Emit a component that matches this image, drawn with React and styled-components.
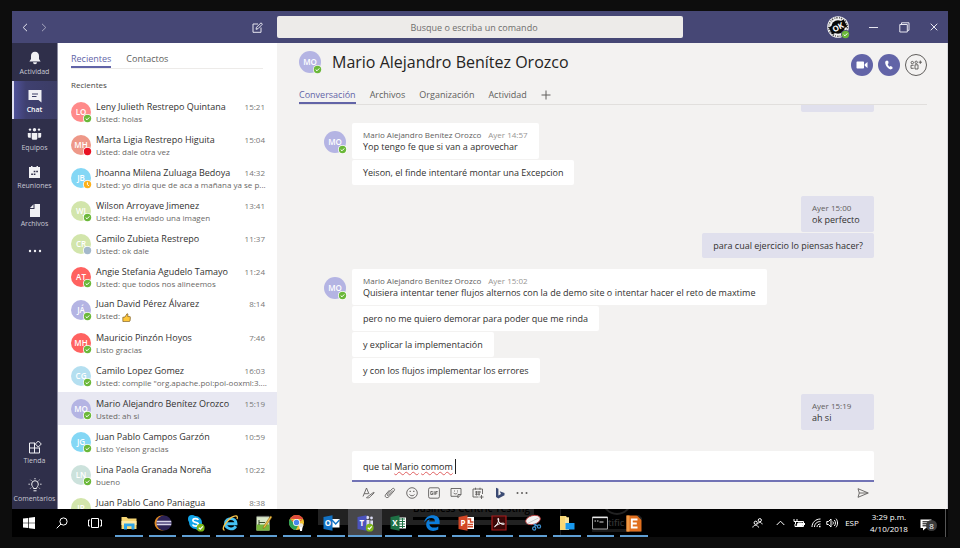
import React, { useState } from "react";
import styled, { createGlobalStyle, css } from "styled-components";

const Global = createGlobalStyle`
  * { box-sizing: border-box; }
  body { margin: 0; background: #0d0d0d; font-family: "Open Sans", "Noto Sans", sans-serif; }
  button, input { font: inherit; color: inherit; background: none; border: 0; padding: 0; margin: 0; }
  ul { list-style: none; margin: 0; padding: 0; }
  svg { display: block; flex: none; }
`;

/* ---------- frame ---------- */

const Screen = styled.div`
  height: 100vh;
  padding: 11px 12px;
  display: flex;
  flex-direction: column;
  font-size: 9px;
  line-height: 12px;
  color: #333;
`;

const Body = styled.div`
  flex: 1;
  min-height: 0;
  display: grid;
  grid-template-columns: 46px 219px minmax(0, 1fr);
`;

/* ---------- title bar ---------- */

const TitleBar = styled.header`
  height: 32px;
  flex: none;
  display: flex;
  align-items: center;
  background: #464775;
  color: #e6e6f0;
`;

const TitleLeft = styled.div`
  width: 265px;
  flex: none;
  display: flex;
  align-items: center;
  padding: 0 13px 0 6px;
`;

const IconButton = styled.button`
  width: ${(p) => p.$w || 20}px;
  height: ${(p) => p.$h || 20}px;
  flex: none;
  display: flex;
  align-items: center;
  justify-content: center;
  opacity: ${(p) => (p.$dim ? 0.6 : 1)};
`;

const Push = styled.span`
  flex: 1;
`;

const Search = styled.input`
  flex: 0 1 406px;
  min-width: 0;
  height: 22px;
  border-radius: 2px;
  background: #edebe9;
  color: #333;
  text-align: center;
  padding-right: 2px;
  outline: 0;
  &::placeholder {
    color: #6f6e6d;
    opacity: 1;
  }
`;

const WindowControls = styled.div`
  display: flex;
  align-items: center;
`;

/* ---------- avatars ---------- */

const AvatarRoot = styled.span`
  position: relative;
  width: ${(p) => p.$size}px;
  height: ${(p) => p.$size}px;
  flex: none;
  border-radius: 50%;
  background: ${(p) => p.$color};
  color: #fff;
  font-size: 8px;
  font-weight: 600;
  display: flex;
  align-items: center;
  justify-content: center;
`;

const BadgeSpot = styled.span`
  position: absolute;
  right: -1px;
  bottom: -1px;
`;

const presenceColor = { ok: "#6bb83a", busy: "#e81123", away: "#fcb019", off: "#a4b8cb" };

function Presence({ kind, ring = "#fff" }) {
  return (
    <svg width="9" height="9" viewBox="0 0 9 9" aria-hidden="true">
      <circle cx="4.5" cy="4.5" r="4.5" fill={ring} />
      <circle cx="4.5" cy="4.5" r="3.7" fill={presenceColor[kind]} />
      {kind === "ok" && <path d="M2.7 4.6l1.3 1.2 2.3-2.4" fill="none" stroke="#fff" strokeWidth="1" />}
      {kind === "away" && <path d="M4.4 2.3v2.4l1.5 1.1" fill="none" stroke="#fff" strokeWidth="1" />}
    </svg>
  );
}

function Avatar({ initials, color = "#b4b4e3", size = 20, presence = "ok", ring }) {
  return (
    <AvatarRoot $size={size} $color={color}>
      {initials}
      <BadgeSpot>
        <Presence kind={presence} ring={ring} />
      </BadgeSpot>
    </AvatarRoot>
  );
}

const Profile = styled.button`
  position: relative;
  width: 22px;
  height: 22px;
  margin-right: 9px;
`;

/* ---------- rail ---------- */

const Rail = styled.nav`
  background: #2f2f4a;
  border-right: 1px solid #8c8ca0;
  color: #c8c8d4;
  display: flex;
  flex-direction: column;
  min-height: 0;
`;

const RailItem = styled.button`
  height: 38px;
  flex: none;
  display: flex;
  flex-direction: column;
  align-items: center;
  justify-content: flex-end;
  gap: 1px;
  padding-bottom: 5px;
  font-size: 7px;
  line-height: 9px;
  ${(p) =>
    p.$active &&
    css`
      color: #fff;
      font-weight: 600;
      background: linear-gradient(90deg, #5254a0 0, #3f4070 14px, #3b3c64 100%);
      box-shadow: inset 2px 0 #dcdcf0;
    `}
`;

const RailMore = styled(RailItem)`
  justify-content: center;
  padding: 0 0 2px;
`;

const RailIcon = styled.span`
  height: 16px;
  display: flex;
  align-items: center;
  color: #f0f0f4;
`;

const RailSpace = styled.span`
  height: 1px;
  flex: none;
`;

/* ---------- contact list ---------- */

const ListPane = styled.section`
  background: #fff;
  overflow: hidden;
  min-height: 0;
`;

const TabStrip = styled.div`
  display: flex;
  gap: ${(p) => p.$gap}px;
  border-bottom: 1px solid ${(p) => p.$line};
`;

const Tab = styled.button`
  height: ${(p) => p.$h}px;
  color: ${(p) => (p.$active ? "#6264a7" : "#605e5c")};
  border-bottom: 2px solid ${(p) => (p.$active ? "#6264a7" : "transparent")};
`;

const ListTabs = styled.div`
  padding: 9px 14px 0 13px;
`;

const GroupTitle = styled.h2`
  margin: 0;
  padding: 10px 13px 4px;
  font-size: 8px;
  line-height: 12px;
  font-weight: 400;
  color: #484644;
`;

const Row = styled.button`
  width: 100%;
  height: 33px;
  padding: 0 12px 0 13px;
  display: grid;
  grid-template-columns: 20px minmax(0, 1fr);
  column-gap: 5px;
  align-items: center;
  text-align: left;
  background: ${(p) => (p.$selected ? "#e8e8f2" : "transparent")};
`;

const RowLine = styled.span`
  display: flex;
  justify-content: space-between;
`;

const RowName = styled.span`
  font-size: 9px;
  line-height: 14px;
  color: #323130;
  white-space: nowrap;
`;

const RowTime = styled.span`
  font-size: 8px;
  line-height: 14px;
  color: #777;
`;

const RowPreview = styled.span`
  display: block;
  margin-right: -6px;
  font-size: 8px;
  line-height: 10px;
  color: #6a6866;
  overflow: hidden;
  white-space: nowrap;
  text-overflow: ellipsis;
  & svg {
    display: inline-block;
    vertical-align: middle;
  }
`;

/* ---------- conversation ---------- */

const Main = styled.main`
  background: #f3f2f1;
  border-right: 1px solid #d8d8dc;
  display: flex;
  flex-direction: column;
  min-width: 0;
  min-height: 0;
`;

const ChatHeader = styled.div`
  padding: 7px 20px 0 22px;
  flex: none;
`;

const HeaderTop = styled.div`
  height: 24px;
  display: flex;
  align-items: center;
  gap: 11px;
`;

const PersonTitle = styled.h1`
  margin: 0;
  flex: 1;
  font-size: 16px;
  line-height: 22px;
  font-weight: 500;
  color: #252423;
  white-space: nowrap;
`;

const CallButtons = styled.div`
  display: flex;
  gap: 5px;
  padding-top: 6px;
`;

const RoundButton = styled.button`
  width: 22px;
  height: 22px;
  border-radius: 50%;
  display: flex;
  align-items: center;
  justify-content: center;
  color: ${(p) => (p.$outline ? "#484644" : "#fff")};
  background: ${(p) => (p.$outline ? "transparent" : "#6264a7")};
  border: ${(p) => (p.$outline ? "1px solid #605e5c" : "0")};
`;

const HeaderTabs = styled.div`
  padding-top: 13px;
`;

const Thread = styled.div`
  flex: 1;
  min-height: 0;
  overflow: hidden;
  display: flex;
  flex-direction: column;
  justify-content: flex-end;
  gap: 11px;
  padding: 0 73px 21px 47px;
`;

const Group = styled.div`
  display: flex;
  flex: none;
  gap: 6px;
  justify-content: ${(p) => (p.$own ? "flex-end" : "flex-start")};
`;

const GroupAvatar = styled.div`
  padding-top: 8px;
`;

const Bubbles = styled.div`
  display: flex;
  flex-direction: column;
  gap: 1px;
  align-items: ${(p) => (p.$own ? "flex-end" : "flex-start")};
`;

const Bubble = styled.div`
  min-height: 25px;
  min-width: 73px;
  padding: 7px 11px 6px;
  border-radius: 2px;
  background: ${(p) => (p.$own ? "#e0e0ed" : "#fff")};
  color: #323130;
`;

const Meta = styled.div`
  display: flex;
  gap: 7px;
  margin: -1px 0 1px;
  font-size: 8px;
  line-height: 11px;
  color: #605e5c;
`;

const Stamp = styled.time`
  color: ${(p) => (p.$own ? "#605e5c" : "#979593")};
`;

const Composer = styled.form`
  flex: none;
  padding: 0 73px 0 75px;
`;

const ComposeBox = styled.div`
  position: relative;
  height: 31px;
  background: #fff;
  border-bottom: 2px solid #7173b5;
  border-radius: 2px 2px 0 0;
`;

const ComposeInput = styled.input`
  width: 100%;
  height: 29px;
  padding: 2px 11px 0;
  outline: 0;
  color: #252423;
`;

const SpellLayer = styled.div`
  position: absolute;
  inset: 0;
  padding: 10px 11px;
  color: transparent;
  white-space: pre;
  pointer-events: none;
`;

const Misspelt = styled.span`
  text-decoration: underline wavy #e06060 1px;
  text-underline-offset: 1px;
  text-decoration-skip-ink: none;
`;

const Caret = styled.span`
  border-left: 1px solid #222;
  padding: 1px 0;
`;

const ComposeTools = styled.div`
  height: 27px;
  padding: 0 1px 5px 6px;
  display: flex;
  align-items: center;
  gap: 2px;
  color: #605e5c;
`;

/* ---------- taskbar ---------- */

const Taskbar = styled.footer`
  position: relative;
  height: 28px;
  flex: none;
  display: flex;
  background: #000;
  color: #fff;
  overflow: hidden;
`;

const Backdrop = styled.div`
  position: absolute;
  inset: 0;
  color: #000;
  & svg {
    width: 936px;
    height: 28px;
  }
`;

const SystemKeys = styled.div`
  position: relative;
  display: grid;
  grid-template-columns: repeat(3, 33px);
`;

const Apps = styled.div`
  position: relative;
  flex: 0 1 539px;
  margin-left: 1px;
  display: grid;
  grid-template-columns: repeat(16, minmax(0, 1fr));
`;

const TaskButton = styled.button`
  height: 28px;
  padding: 2px 0;
  display: flex;
  align-items: center;
  justify-content: center;
`;

const AppButton = styled(TaskButton)`
  margin: 0 ${(p) => (p.$active ? 0 : 3)}px;
  background: ${(p) => (p.$active ? "#47474a" : "transparent")};
  border-bottom: 2px solid #5f9fd4;
  padding: 2px 0 0;
`;

const Tray = styled.div`
  position: relative;
  margin-left: auto;
  display: flex;
  align-items: center;
  padding-right: 1px;
`;

const Language = styled.button`
  width: 26px;
  font-size: 8px;
`;

const Clock = styled.button`
  width: 48px;
  text-align: center;
  font-size: 8px;
  line-height: 12px;
`;

const Notice = styled.button`
  position: relative;
  width: 32px;
  height: 24px;
  padding: 4px 0 0 7px;
`;

const Count = styled.span`
  position: absolute;
  left: 13px;
  top: 9px;
  width: 11px;
  height: 11px;
  border-radius: 50%;
  background: #3c3c3c;
  font-size: 8px;
  line-height: 11px;
  text-align: center;
`;

const ShowDesktop = styled.button`
  width: 2px;
  height: 28px;
  border-left: 1px solid #555;
`;

/* ---------- icons ---------- */

function Icon({ w = 14, h = w, box = `0 0 ${w} ${h}`, children, sw = 1 }) {
  return (
    <svg width={w} height={h} viewBox={box} fill="none" stroke="currentColor" strokeWidth={sw} aria-hidden="true">
      {children}
    </svg>
  );
}

const icons = {
  bell: (
    <Icon w={14}>
      <path d="M7 .8c-2.600 0-4 1.800-4 4.200v3L1.400 10.400h11.200L11 8V5C11 2.600 9.600.8 7 .8z" fill="currentColor" stroke="none" />
      <path d="M5 11.300h4a2 2 0 01-4 0z" fill="currentColor" stroke="none" />
    </Icon>
  ),
  chat: (
    <Icon w={14}>
      <path d="M.5 1h13v12.500L10.500 11H.5z" fill="currentColor" stroke="none" />
      <path d="M4 5h6M4 7.500h4.500" stroke="#3b3c64" />
    </Icon>
  ),
  teams: (
    <Icon w={15} h={14}>
      <g fill="currentColor" stroke="none">
        <circle cx="7.500" cy="2.800" r="1.700" />
        <circle cx="3" cy="2.600" r="1.200" />
        <circle cx="12" cy="2.600" r="1.200" />
        <path d="M4.700 6h5.600v5.200a1.500 1.500 0 01-1.500 1.500H6.200a1.500 1.500 0 01-1.500-1.500z" />
        <path d="M.8 6h3v4.700H2.300A1.500 1.500 0 01.8 9.200zM14.200 6h-3v4.700h1.500a1.500 1.500 0 001.500-1.500z" />
      </g>
    </Icon>
  ),
  calendar: (
    <Icon w={13} h={14}>
      <path d="M1 2h2V1h1.500v1h4V1H10v1h2v11H1z" fill="currentColor" stroke="none" />
      <g stroke="#2f2f4a" strokeWidth="1.600">
        <path d="M5.700 6.500h1.700M8.200 6.500h1.700M3.200 9.300h1.700M5.700 9.300h1.700" />
      </g>
    </Icon>
  ),
  files: (
    <Icon w={12} h={15}>
      <path d="M5.500 1H11v13H1V6h4.500z" fill="currentColor" stroke="none" />
      <path d="M4.500 1.300V5H1z" fill="currentColor" stroke="none" />
    </Icon>
  ),
  store: (
    <Icon w={14}>
      <path d="M7 3H1.500v10h10V7.500M1.500 8h10M6.500 3v10" />
      <path d="M10.300 1l3 3-3 3-3-3z" />
    </Icon>
  ),
  bulb: (
    <Icon w={16} h={14}>
      <path d="M6.500 10.500C6.500 9 4.700 8.400 4.700 6a3.300 3.300 0 016.600 0c0 2.400-1.800 3-1.800 4.500zM6.500 12.800h3" />
      <path d="M8 0v1.300M3.500 1.800l.9.9M12.500 1.800l-.9.9M1.500 6.200h1.300M13.200 6.200h1.300M3.300 10.500l.8-.8M12.700 10.500l-.8-.8" />
    </Icon>
  ),
  dots: (
    <Icon w={14} h={4}>
      <g fill="currentColor" stroke="none">
        <circle cx="2" cy="2" r="1.200" />
        <circle cx="7" cy="2" r="1.200" />
        <circle cx="12" cy="2" r="1.200" />
      </g>
    </Icon>
  ),
  dotsSmall: (
    <Icon w={12} h={4}>
      <g fill="currentColor" stroke="none">
        <circle cx="1.500" cy="2" r="1" />
        <circle cx="6" cy="2" r="1" />
        <circle cx="10.500" cy="2" r="1" />
      </g>
    </Icon>
  ),
  back: <Icon w={6} h={9}><path d="M5 .8L1.200 4.500 5 8.200" /></Icon>,
  forward: <Icon w={6} h={9}><path d="M1 .8l3.800 3.700L1 8.200" /></Icon>,
  edit: (
    <Icon w={11}>
      <path d="M6 2H1v8.300h8V5.500" />
      <path d="M4 7.300l.5-2L9 .8l1.400 1.400L6 6.700z" />
    </Icon>
  ),
  min: <Icon w={9}><path d="M0 4.500h9" /></Icon>,
  restore: (
    <Icon w={11}>
      <path d="M.8 2.500h7.500v7.500H.8z" />
      <path d="M2.500 2.500V.8H10v7.500H8.300" />
    </Icon>
  ),
  close: <Icon w={8}><path d="M.7.7l6.600 6.600M7.300.7L.7 7.300" /></Icon>,
  video: (
    <Icon w={12} h={8}>
      <path d="M.5 1.200Q.5.500 1.200.500h6q.8 0 .8.7v5.600q0 .7-.8.7h-6q-.7 0-.7-.7zM8.700 3.200L11.500 1v6L8.700 4.800z" fill="currentColor" stroke="none" />
    </Icon>
  ),
  phone: (
    <Icon w={10}>
      <path d="M2.800.5L1.300 1.400C.6 3.900 3.300 8.600 6.700 9.500l1.900-.9-.2-1.700-1.700-.8-1.200.7C4.600 6.200 3.900 5.100 3.700 4l.9-.8L4.200.900z" fill="currentColor" stroke="none" />
    </Icon>
  ),
  addPeople: (
    <Icon w={12} h={10} sw={0.8}>
      <circle cx="2.300" cy="2.600" r="1.200" />
      <circle cx="6.200" cy="2.300" r="1.200" />
      <path d="M3.700 5.300H1v3h2.700M5 4.800h3v4.200H5zM10.300.500v3.400M8.600 2.200H12" />
    </Icon>
  ),
  plus: <Icon w={10}><path d="M5 .5v9M.5 5h9" /></Icon>,
  format: (
    <Icon w={13} h={12} sw={0.9}>
      <path d="M1 9.500L4.500 1 7 7M2.200 6.700h4" />
      <path d="M4.500 10.700c1.300-.1 1.400-2 2.700-2.200l4.600-3.300.4.700-4 3.800c-.4 1.200-2.300 1.400-3.700 1z" />
    </Icon>
  ),
  clip: (
    <Icon w={12} sw={0.9}>
      <path d="M8.800 3.500L4.600 8.200c-.8 1-2-.1-1.200-1l4.700-5.300c1.400-1.400 3.300.2 2.100 1.800l-5.300 6c-2.100 2.200-5 0-3.100-2.400l3.700-4.200" />
    </Icon>
  ),
  smile: (
    <Icon w={12} sw={0.9}>
      <circle cx="6" cy="6" r="5.300" />
      <path d="M3.500 7.500c1 1.700 4 1.700 5 0" />
      <path d="M4.200 3.700v1.300M7.800 3.700v1.300" strokeWidth="1.200" />
    </Icon>
  ),
  gif: (
    <Icon w={12} sw={0.9}>
      <rect x=".6" y=".8" width="10.800" height="10.400" rx="1.500" />
      <path d="M4.700 4.500H2.800v3h1.900V6H4M6.200 4.200v3.600M7.700 7.800V4.500h2M7.700 6h1.600" />
    </Icon>
  ),
  sticker: (
    <Icon w={12} sw={0.9}>
      <path d="M1 1.500h10v6L8 10.700V7.500h3M8 9.300H1V1.500" />
      <path d="M3.500 5.800c.8 1.500 3 1.500 4 0M4.500 3.500v1M7.500 3.500v1" />
    </Icon>
  ),
  meet: (
    <Icon w={12} sw={0.9}>
      <path d="M6.500 10H1V2h9.500v5M3.500.700v2M8 .700v2M3 5h6M3 7.200h5M4.500 4v4.500M7 4v4.500M9.500 8v4M7.500 10h4" />
    </Icon>
  ),
  bing: (
    <Icon w={10} h={12}>
      <path d="M1 .8l2.400.9v6.800L6 7 4.700 4.200l4.800 1.700v2.400L3.400 11.500 1 10z" fill="#3b4a73" stroke="none" />
    </Icon>
  ),
  send: <Icon w={12} h={10} sw={0.9}><path d="M1 .7L11.300 5 1 9.300 2.300 5zM2.300 5h8" /></Icon>,
  thumb: (
    <svg width="9" height="9" viewBox="0 0 9 9" role="img" aria-label="Me gusta">
      <path d="M.8 4.300L3 4 5 .7l1 .5-.3 2.300 2.500.2.200 1-.4 3.300-.7.600H.9z" fill="#ffc83d" stroke="#7a5a20" strokeWidth=".7" />
    </svg>
  ),
};

function OkPhoto() {
  return (
    <svg width="22" height="22" viewBox="0 0 22 22" aria-hidden="true">
      <circle cx="11" cy="11" r="10.800" fill="#f4f4f4" />
      <circle cx="11" cy="11" r="9.300" fill="none" stroke="#555" strokeWidth="1.600" strokeDasharray="1.200 1.200 .7 .9" pathLength="50" />
      <circle cx="11" cy="11" r="6.800" fill="#0a0a0a" />
      <rect x="2.500" y="7" width="17" height="8" rx="1" fill="#0a0a0a" transform="rotate(-28 11 11)" />
      <text x="11" y="14" textAnchor="middle" fontSize="8" fontWeight="700" fill="#fff" transform="rotate(-28 11 11)">OK</text>
    </svg>
  );
}

/* ---------- taskbar artwork ---------- */

const Art = ({ children }) => (
  <svg width="18" height="18" viewBox="0 0 18 18" aria-hidden="true">{children}</svg>
);

const officeTile = (letter, fill) => (
  <>
    <path d="M1.500 3L10.500 1.300v15.400L1.500 15z" fill={fill} />
    <text x="5.900" y="12" textAnchor="middle" fontSize="8" fontWeight="700" fill="#fff">{letter}</text>
  </>
);

const skypeCheck = (
  <>
    <circle cx="13.700" cy="13.700" r="3.900" fill="#7cb518" />
    <path d="M11.800 13.700l1.500 1.400 2.500-2.700" fill="none" stroke="#fff" strokeWidth="1.200" />
  </>
);

const apps = [
  ["Explorador de archivos", <Art><path d="M1.500 3h5l1.500 1.500h8.500V15h-15z" fill="#f8d775" /><path d="M1.500 7h15v4h-15z" fill="#fde9a4" /><path d="M4 9.500h10.500v6h-3v-3.300H7v3.300H4z" fill="#2fa5e8" /></Art>],
  ["Eclipse", <Art><circle cx="8" cy="9" r="7.500" fill="#e08b25" /><circle cx="10" cy="9" r="7.500" fill="#2c2255" /><path d="M2.700 7.500h14.600M2.700 10.500h14.600" stroke="#d8d4ea" strokeWidth="1.300" /><path d="M2.500 9h15" stroke="#8f87b8" /></Art>],
  ["Skype Empresarial", <Art><circle cx="8.500" cy="8.500" r="6.500" fill="#12a5e8" /><circle cx="5" cy="5" r="4" fill="#12a5e8" /><circle cx="11.500" cy="12" r="4" fill="#12a5e8" /><path d="M11.300 6C10.500 4 5.800 4 5.900 6.600c.1 2.400 5.400 1.200 5.400 3.700 0 2.400-5 2.300-5.700.2" fill="none" stroke="#fff" strokeWidth="1.700" />{skypeCheck}</Art>],
  ["Internet Explorer", <Art><path d="M14.800 12.200c-2.700 4.700-10.300 2.700-10.300-2.700 0-6.500 10.500-6.600 10.500.3H5.500" fill="none" stroke="#45c1f3" strokeWidth="2.900" /><path d="M3.500 16.300C-1.500 14.500 10 1.300 15.300 2c1.300.2 1.300 1.700.7 3" fill="none" stroke="#f6c34a" strokeWidth="1.300" /></Art>],
  ["Notepad++", <Art><path d="M1.500 2.500h13v14h-13z" fill="#d9e8c8" /><path d="M1.500 10.500h13v6h-13z" fill="#78b83c" /><path d="M2.500 2.500h11" stroke="#777" strokeWidth="1.500" strokeDasharray="1 1" /><path d="M4 6v5M4 8.500h6" stroke="#3b4e2c" /><path d="M8.500 12.500l7-10.500 1.500 1-7 10.500-2 1z" fill="#f3c143" stroke="#7c5a1c" strokeWidth=".5" /></Art>],
  ["Chrome", <Art><circle cx="8.500" cy="8.500" r="7.500" fill="#f1c232" /><path d="M8.500 8.500L2 4.700a7.500 7.500 0 0013-.1z" fill="#df4b3c" /><path d="M2 4.700a7.500 7.500 0 005.800 11.300l3-5.700-4.300-.1z" fill="#2da259" /><path d="M2 4.700A7.500 7.500 0 0115.200 5H8.500z" fill="#df4b3c" /><circle cx="8.500" cy="8.500" r="3.500" fill="#fff" /><circle cx="8.500" cy="8.500" r="2.700" fill="#4787ed" /><circle cx="13" cy="11.500" r="2.300" fill="#e8e4df" /><path d="M11.500 13h3l-.5 4h-2z" fill="#fff" /></Art>],
  ["Outlook", <Art><path d="M10 5h7.500v8.500H10z" fill="#fff" /><path d="M10 6l3.700 4L17.500 6" fill="none" stroke="#1272c4" strokeWidth="1.400" />{officeTile("O", "#1272c4")}</Art>],
  ["Microsoft Teams", <Art><g fill="#dcdcf4"><circle cx="11.500" cy="3.500" r="1.700" /><circle cx="15.500" cy="4" r="1.400" /><path d="M10 6h3.500v7H10zM14.300 6.500H17v5h-2.700z" /></g>{officeTile("T", "#4b53bc")}{skypeCheck}</Art>, true],
  ["Excel", <Art><path d="M10 3.500h7v11h-7z" fill="#fff" /><path d="M10 5h6M10 7.500h6M10 10h6M10 12.500h6M13.500 4v10" stroke="#217346" />{officeTile("X", "#1e7145")}</Art>],
  ["Microsoft Edge", <Art><path d="M1.300 8.300C2.500-1 17.300-.800 16.600 8v2H6.300c.3 4 5.700 4.500 9 2.400v3.200c-5.500 3-12.300 1-12.100-5.300C3.300 7.800 4.800 6 6.800 5.200c-.5.800-.7 1.500-.7 2.300h5.800C12.200 2.500 4.500 3 1.300 8.300z" fill="#0c7ddb" /></Art>],
  ["PowerPoint", <Art><path d="M10 3h7v12h-7z" fill="#fff" /><path d="M10.500 5h3v3h3M10.500 10.500h5.500M10.500 12.700h5.500" fill="none" stroke="#d24726" strokeWidth="1.400" />{officeTile("P", "#d24726")}</Art>],
  ["Adobe Reader", <Art><path d="M2 2h14v14H2z" fill="#3a0808" stroke="#a81c1c" strokeWidth="1.200" /><path d="M4.500 12.700C7.500 11 9 7 8.700 5c-.2-1.300-1.200-.8-.7.700.6 2.400 3 5 5.700 4.700 1.300-.1.700-1.300-1-1.200-2.500 0-5 1-8.200 3.500z" fill="none" stroke="#fff" strokeWidth="1" /></Art>],
  ["Recortes", <Art><ellipse cx="9" cy="6" rx="7.500" ry="4.400" transform="rotate(-15 9 6)" fill="#f4f2f2" stroke="#b33" strokeWidth=".8" /><path d="M3.500 9.500L14.500 4" stroke="#c9c9c9" strokeWidth="1" /><g fill="none" stroke="#3f90cf" strokeWidth="1.200"><circle cx="10.200" cy="14.500" r="1.600" /><circle cx="15" cy="12.500" r="1.600" /><path d="M10.500 12.900L12 9.500M13.500 11.900L9.500 10.200" /></g></Art>],
  ["Carpeta", <Art><path d="M2 2h6l1 1.500h2V16H2z" fill="#f8d775" /><path d="M7 3.500h4V16H7z" fill="#fae5a0" /><path d="M7.500 9h9v6.500h-9z" fill="#1899ee" /></Art>],
  ["Símbolo del sistema", <Art><path d="M1.500 3h15v12h-15z" fill="#050505" stroke="#a5a5a5" /><path d="M1.500 3.500h15" stroke="#e8e8e8" strokeWidth="1.300" /><path d="M3.500 7h1.500M6 7h1.500M8.500 8h4" stroke="#ddd" /></Art>],
  ["Editor", <Art><path d="M1.500 1.500h12l3 3v13h-15z" fill="#e06f1e" /><path d="M1.500 1.500h3v16h-3z" fill="#f09a45" /><path d="M11.500 1l5.500 5.500V4L14 1z" fill="#222" /><path d="M12.500 5.500H6.800v8h5.700M6.800 9.500h5" fill="none" stroke="#fff" strokeWidth="1.900" /></Art>],
];

/* ---------- data ---------- */

const contacts = [
  ["LO", "#ff8a8a", "ok", "Leny Julieth Restrepo Quintana", "15:21", "Usted: holas"],
  ["MH", "#ee9888", "busy", "Marta Ligia Restrepo Higuita", "15:04", "Usted: dale otra vez"],
  ["JB", "#84d7f5", "away", "Jhoanna Milena Zuluaga Bedoya", "14:32", "Usted: yo diria que de aca a mañana ya se p..."],
  ["WJ", "#d2e5ab", "ok", "Wilson Arroyave Jimenez", "13:41", "Usted: Ha enviado una imagen"],
  ["CR", "#d2e5ab", "off", "Camilo Zubieta Restrepo", "11:37", "Usted: ok dale"],
  ["AT", "#ff6260", "ok", "Angie Stefania Agudelo Tamayo", "11:24", "Usted: que todos nos alineemos"],
  ["JÁ", "#b4b4e3", "ok", "Juan David Pérez Álvarez", "8:14", <>Usted: {icons.thumb}</>],
  ["MH", "#ff6260", "ok", "Mauricio Pinzón Hoyos", "7:46", "Listo gracias"],
  ["CG", "#b4dff0", "ok", "Camilo Lopez Gomez", "16:03", "Usted: compile \"org.apache.poi:poi-ooxml:3...."],
  ["MO", "#b4b4e3", "ok", "Mario Alejandro Benítez Orozco", "15:19", "Usted: ah si"],
  ["JG", "#84d7f5", "ok", "Juan Pablo Campos Garzón", "10:59", "Listo Yeison gracias"],
  ["LN", "#cce2dc", "ok", "Lina Paola Granada Noreña", "10:22", "bueno"],
  ["JP", "#d2e5ab", "ok", "Juan Pablo Cano Paniagua", "8:38", ""],
];

const person = "Mario Alejandro Benítez Orozco";

const thread = [
  { own: true, lines: [""] },
  { time: "Ayer 14:57", lines: ["Yop tengo fe que si van a aprovechar", "Yeison, el finde intentaré montar una Excepcion"] },
  { own: true, time: "Ayer 15:00", lines: ["ok perfecto", "para cual ejercicio lo piensas hacer?"] },
  {
    time: "Ayer 15:02",
    lines: [
      "Quisiera intentar tener flujos alternos con la de demo site o intentar hacer el reto de maxtime",
      "pero no me quiero demorar para poder que me rinda",
      "y explicar la implementación",
      "y con los flujos implementar los errores",
    ],
  },
  { own: true, time: "Ayer 15:19", lines: ["ah si"] },
];

const railTop = [
  ["Actividad", icons.bell],
  ["Chat", icons.chat],
  ["Equipos", icons.teams],
  ["Reuniones", icons.calendar],
  ["Archivos", icons.files],
];

const composeTools = [
  ["Formato", icons.format],
  ["Adjuntar", icons.clip],
  ["Emoji", icons.smile],
  ["GIF", icons.gif],
  ["Adhesivo", icons.sticker],
  ["Reunirse", icons.meet],
  ["Bing", icons.bing],
  ["Más opciones", icons.dotsSmall],
];

/* ---------- sections ---------- */

function Header() {
  return (
    <TitleBar>
      <TitleLeft>
        <IconButton $w={13} aria-label="Atrás">{icons.back}</IconButton>
        <IconButton $w={26} $dim aria-label="Adelante">{icons.forward}</IconButton>
        <Push />
        <IconButton $w={13} aria-label="Nuevo chat">{icons.edit}</IconButton>
      </TitleLeft>
      <Search type="search" aria-label="Buscar" placeholder="Busque o escriba un comando" />
      <Push />
      <WindowControls>
        <Profile aria-label="Perfil">
          <OkPhoto />
          <BadgeSpot><Presence kind="ok" ring="#464775" /></BadgeSpot>
        </Profile>
        <IconButton $w={30} aria-label="Minimizar">{icons.min}</IconButton>
        <IconButton $w={32} aria-label="Restaurar">{icons.restore}</IconButton>
        <IconButton $w={28} aria-label="Cerrar">{icons.close}</IconButton>
      </WindowControls>
    </TitleBar>
  );
}

function Sidebar() {
  return (
    <Rail aria-label="Aplicaciones">
      {railTop.map(([label, icon]) => (
        <RailItem key={label} $active={label === "Chat"}>
          <RailIcon>{icon}</RailIcon>
          {label}
        </RailItem>
      ))}
      <RailMore aria-label="Más aplicaciones">
        <RailIcon>{icons.dots}</RailIcon>
      </RailMore>
      <Push />
      <RailItem><RailIcon>{icons.store}</RailIcon>Tienda</RailItem>
      <RailItem><RailIcon>{icons.bulb}</RailIcon>Comentarios</RailItem>
      <RailSpace />
    </Rail>
  );
}

function Contacts() {
  return (
    <ListPane>
      <ListTabs>
        <TabStrip $gap={15} $line="#edebe9">
          <Tab $active $h={16}>Recientes</Tab>
          <Tab $h={16}>Contactos</Tab>
        </TabStrip>
      </ListTabs>
      <GroupTitle>Recientes</GroupTitle>
      <ul>
        {contacts.map(([initials, color, presence, name, time, preview], i) => (
          <li key={name}>
            <Row $selected={i === 9}>
              <Avatar initials={initials} color={color} presence={presence} />
              <span>
                <RowLine>
                  <RowName>{name}</RowName>
                  <RowTime>{time}</RowTime>
                </RowLine>
                <RowPreview>{preview || "\u00a0"}</RowPreview>
              </span>
            </Row>
          </li>
        ))}
      </ul>
    </ListPane>
  );
}

function Conversation() {
  const [draft, setDraft] = useState("que tal Mario comom ");
  const untouched = draft === "que tal Mario comom ";
  return (
    <Main>
      <ChatHeader>
        <HeaderTop>
          <Avatar initials="MO" size={22} ring="#f3f2f1" />
          <PersonTitle>{person}</PersonTitle>
          <CallButtons>
            <RoundButton aria-label="Videollamada">{icons.video}</RoundButton>
            <RoundButton aria-label="Llamar">{icons.phone}</RoundButton>
            <RoundButton $outline aria-label="Agregar personas">{icons.addPeople}</RoundButton>
          </CallButtons>
        </HeaderTop>
        <HeaderTabs>
          <TabStrip $gap={14} $line="#e1dfdd">
            <Tab $active $h={17}>Conversación</Tab>
            <Tab $h={17}>Archivos</Tab>
            <Tab $h={17}>Organización</Tab>
            <Tab $h={17}>Actividad</Tab>
            <Tab $h={17} aria-label="Agregar pestaña">{icons.plus}</Tab>
          </TabStrip>
        </HeaderTabs>
      </ChatHeader>
      <Thread>
        {thread.map((group, g) => (
          <Group key={g} $own={group.own}>
            {!group.own && <GroupAvatar><Avatar initials="MO" size={22} /></GroupAvatar>}
            <Bubbles $own={group.own}>
              {group.lines.map((line, i) => (
                <Bubble key={i} $own={group.own}>
                  {i === 0 && group.time && (
                    <Meta>
                      {!group.own && <span>{person}</span>}
                      <Stamp $own={group.own}>{group.time}</Stamp>
                    </Meta>
                  )}
                  {line}
                </Bubble>
              ))}
            </Bubbles>
          </Group>
        ))}
      </Thread>
      <Composer onSubmit={(e) => e.preventDefault()}>
        <ComposeBox>
          <ComposeInput aria-label="Escribir un mensaje" value={draft} onChange={(e) => setDraft(e.target.value)} spellCheck={false} />
          {untouched && (
            <SpellLayer aria-hidden="true">
              que tal <Misspelt>Mario</Misspelt> <Misspelt>comom</Misspelt> <Caret />
            </SpellLayer>
          )}
        </ComposeBox>
        <ComposeTools>
          {composeTools.map(([label, icon]) => (
            <IconButton key={label} type="button" aria-label={label}>{icon}</IconButton>
          ))}
          <Push />
          <IconButton aria-label="Enviar">{icons.send}</IconButton>
        </ComposeTools>
      </Composer>
    </Main>
  );
}

function Dock() {
  return (
    <Taskbar>
      <Backdrop aria-hidden="true">
        <svg viewBox="0 0 936 28">
          <path d="M306 0h216v16H306z" fill="#222" />
          <path d="M401 8h121v3H401z" fill="#000" />
          <text x="401" y="3" fontSize="10" fontWeight="600" fill="#000">Business Centric Testing</text>
          <path d="M548.500 0v28" stroke="#1f1f1f" />
          <circle cx="605" cy="-9" r="14" fill="none" stroke="#222" strokeWidth="2" />
          <path d="M580 20h49v3h-49z" fill="#1a1a1a" />
          <text x="592" y="17" fontSize="9" fontWeight="600" fill="#333">rtific</text>
        </svg>
      </Backdrop>
      <SystemKeys>
        <TaskButton aria-label="Inicio">
          <svg width="12" height="12" viewBox="0 0 12 12" fill="#fff"><path d="M0 1.600L5.300.9v4.800H0zM6 .8L12 0v5.700H6zM0 6.300h5.300v4.800L0 10.400zM6 6.300h6V12l-6-.8z" /></svg>
        </TaskButton>
        <TaskButton aria-label="Buscar en Windows">
          <Icon w={12}><circle cx="7.500" cy="4.500" r="3.600" /><path d="M5 7L.7 11.300" /></Icon>
        </TaskButton>
        <TaskButton aria-label="Vista de tareas">
          <Icon w={14} h={12}><path d="M3.500 1.500h7v9h-7zM2 3H.5v6H2M12 3h1.500v6H12" /></Icon>
        </TaskButton>
      </SystemKeys>
      <Apps>
        {apps.map(([label, art, active]) => (
          <AppButton key={label} aria-label={label} $active={active}>{art}</AppButton>
        ))}
      </Apps>
      <Tray>
        <IconButton $w={26} aria-label="Contactos">
          <Icon w={11} h={10}><circle cx="7.800" cy="2.200" r="1.600" /><path d="M5.500 6.300c.6-2.600 4-2.600 4.700 0" /><circle cx="3.700" cy="4.800" r="1.600" /><path d="M.8 9.500c.5-3 5-3 5.700 0" /></Icon>
        </IconButton>
        <IconButton $w={21} aria-label="Mostrar iconos ocultos"><Icon w={9} h={6}><path d="M.7 5L4.500 1.200 8.300 5" /></Icon></IconButton>
        <IconButton $w={16} aria-label="Batería">
          <Icon w={12} h={9}><path d="M4 2.500h6.500v5H2V5" /><path d="M5 4h4.500v2.500H4z" fill="currentColor" /><path d="M1 0v2.500h3V0M2.500 2.500V5M11.500 4v2" /></Icon>
        </IconButton>
        <IconButton $w={17} aria-label="Red">
          <Icon w={10}><path d="M1 9C1 4.500 4.500 1 9.500 1M3.500 9c0-3.300 2.500-5.500 6-5.500M6 9c0-2 1.500-3 3.500-3" /><path d="M8 8.500h1.500" strokeWidth="1.500" /></Icon>
        </IconButton>
        <IconButton $w={15} aria-label="Volumen">
          <Icon w={12} h={10}><path d="M.8 3.500h1.700L5 1v8L2.500 6.500H.8zM6.700 3.500c.8.8.8 2.200 0 3M8.300 2c1.500 1.500 1.500 4.500 0 6M10 .7c2 2.200 2 6.400 0 8.600" /></Icon>
        </IconButton>
        <Language>ESP</Language>
        <Clock>3:29 p.m.<br />4/10/2018</Clock>
        <Notice aria-label="8 notificaciones">
          <svg width="12" height="12" viewBox="0 0 12 12"><path d="M.5.500h11v8.500H6L3 11.500V9H.5z" fill="#fff" /><path d="M2.500 2.800h7M2.500 4.800h7M2.500 6.800h4" stroke="#000" /></svg>
          <Count>8</Count>
        </Notice>
        <ShowDesktop aria-label="Mostrar escritorio" />
      </Tray>
    </Taskbar>
  );
}

export default function App() {
  return (
    <Screen>
      <Global />
      <Header />
      <Body>
        <Sidebar />
        <Contacts />
        <Conversation />
      </Body>
      <Dock />
    </Screen>
  );
}
